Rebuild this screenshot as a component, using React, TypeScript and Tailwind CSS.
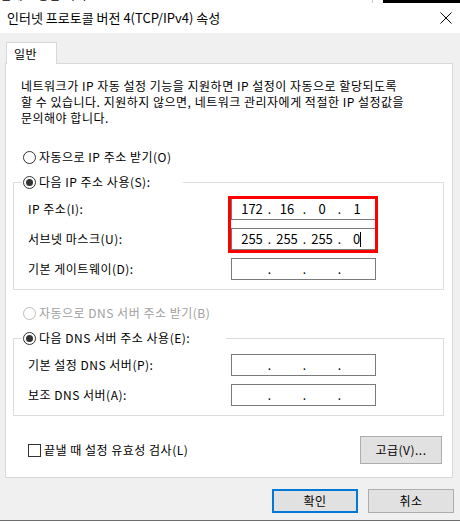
import React from 'react'

function Radio({ checked = false, disabled = false }: { checked?: boolean; disabled?: boolean }) {
  return (
    <span
      className={`w-[13px] h-[13px] rounded-full border bg-white flex items-center justify-center shrink-0 ${
        disabled ? 'border-[#bcbcbc]' : 'border-[#333333]'
      }`}
    >
      {checked && <span className="w-[7px] h-[7px] rounded-full bg-[#333333]" />}
    </span>
  )
}

function IpField({ values = ['', '', '', ''], cursor = false }: { values?: string[]; cursor?: boolean }) {
  return (
    <div className="w-[145px] h-[22px] border border-[#7a7a7a] bg-white flex items-center pl-[4px] tracking-normal">
      {values.map((v, i) => (
        <React.Fragment key={i}>
          {i > 0 && <span className="w-[3px] flex justify-center">.</span>}
          <span className="w-[32px] flex items-center justify-center text-[13px]">
            {v}
            {cursor && i === 3 && <span className="inline-block w-px h-[15px] bg-black" />}
          </span>
        </React.Fragment>
      ))}
    </div>
  )
}

function Row({ label, children }: { label: string; children: React.ReactNode }) {
  return (
    <div className="flex items-center h-[22px]">
      <span className="w-[217px] pl-[14px]">{label}</span>
      {children}
    </div>
  )
}

function Button({ label, primary = false, className = '' }: { label: string; primary?: boolean; className?: string }) {
  return (
    <button
      className={`h-[24px] bg-[#e1e1e1] flex items-center justify-center ${
        primary ? 'border-2 border-[#0078d7]' : 'border border-[#adadad]'
      } ${className}`}
    >
      {label}
    </button>
  )
}

export default function App() {
  return (
    <div className="w-[460px] h-[525px] bg-white overflow-hidden text-black text-[12px] leading-[16px] tracking-[0.5px] font-['Noto_Sans_CJK_KR',sans-serif]">
      {/* slice of the window behind */}
      <div className="h-[3px] flex overflow-hidden">
        <div className="w-[372px] overflow-hidden">
          <span className="block -mt-[13px] whitespace-nowrap">결에 고용할 회의</span>
        </div>
        <div className="w-px bg-[#c8c8c8]" />
        <div className="w-[10px] bg-white" />
        <div className="flex-1 bg-black" />
      </div>

      <div className="h-[518px] flex flex-col bg-[#f0f0f0] border-b border-[#6d6d6d]">
        {/* Title bar */}
        <div className="h-[30px] shrink-0 bg-white flex items-center justify-between pl-[7px] pr-[8px]">
          <span className="text-[13px] tracking-normal">인터넷 프로토콜 버전 4(TCP/IPv4) 속성</span>
          <svg width="12" height="12" viewBox="0 0 12 12" stroke="#000" strokeWidth="1" fill="none">
            <path d="M0.5 0.5 L11.5 11.5 M11.5 0.5 L0.5 11.5" />
          </svg>
        </div>

        <div className="px-[5px] pt-[9px]">
          {/* Tab */}
          <div className="flex">
            <div className="ml-px w-[51px] h-[22px] -mb-px bg-white border border-b-0 border-[#d9d9d9] pl-[7px] flex items-center relative">
              일반
            </div>
          </div>

          {/* Tab panel */}
          <div className="w-[448px] h-[415px] border border-[#d9d9d9] bg-white flex flex-col">
            <p className="mt-[14px] pl-[15px] whitespace-nowrap">
              네트워크가 IP 자동 설정 기능을 지원하면 IP 설정이 자동으로 할당되도록
              <br />할 수 있습니다. 지원하지 않으면, 네트워크 관리자에게 적절한 IP 설정값을
              <br />문의해야 합니다.
            </p>

            <div className="mt-[23px] h-[16px] pl-[17px] flex items-center gap-[3px]">
              <Radio />
              <span>자동으로 IP 주소 받기(O)</span>
            </div>

            {/* IP group */}
            <div className="relative mt-[17px] ml-[7px] w-[431px] border border-[#dcdcdc] pt-[15px] pb-[9px] flex flex-col gap-[8px]">
              <div className="absolute -top-[9px] left-[8px] w-[161px] h-[16px] bg-white flex items-center gap-[3px] pl-px">
                <Radio checked />
                <span>다음 IP 주소 사용(S):</span>
              </div>
              <Row label="IP 주소(I):">
                <IpField values={['172', '16', '0', '1']} />
              </Row>
              <Row label="서브넷 마스크(U):">
                <IpField values={['255', '255', '255', '0']} cursor />
              </Row>
              <Row label="기본 게이트웨이(D):">
                <IpField />
              </Row>
              {/* red highlight */}
              <div className="absolute left-[214px] top-[13px] w-[150px] h-[57px] border-[3px] border-[#ff0000]" />
            </div>

            <div className="mt-[15px] h-[16px] pl-[17px] flex items-center gap-[3px] text-[#a0a0a0]">
              <Radio disabled />
              <span>자동으로 DNS 서버 주소 받기(B)</span>
            </div>

            {/* DNS group */}
            <div className="relative mt-[17px] ml-[7px] w-[431px] border border-[#dcdcdc] pt-[15px] pb-[9px] flex flex-col gap-[8px]">
              <div className="absolute -top-[9px] left-[8px] w-[204px] h-[16px] bg-white flex items-center gap-[3px] pl-px">
                <Radio checked />
                <span>다음 DNS 서버 주소 사용(E):</span>
              </div>
              <Row label="기본 설정 DNS 서버(P):">
                <IpField />
              </Row>
              <Row label="보조 DNS 서버(A):">
                <IpField />
              </Row>
            </div>

            <div className="mt-[20px] flex items-center justify-between pl-[22px] pr-[10px]">
              <div className="flex items-center gap-[3px]">
                <span className="w-[13px] h-[13px] border border-[#333333] bg-white" />
                <span>끝낼 때 설정 유효성 검사(L)</span>
              </div>
              <Button label="고급(V)..." className="w-[82px] h-[28px]" />
            </div>
          </div>

          {/* Dialog buttons */}
          <div className="mt-[11px] flex justify-end gap-[10px] pr-px">
            <Button label="확인" primary className="w-[86px]" />
            <Button label="취소" className="w-[86px]" />
          </div>
        </div>
      </div>
    </div>
  )
}
